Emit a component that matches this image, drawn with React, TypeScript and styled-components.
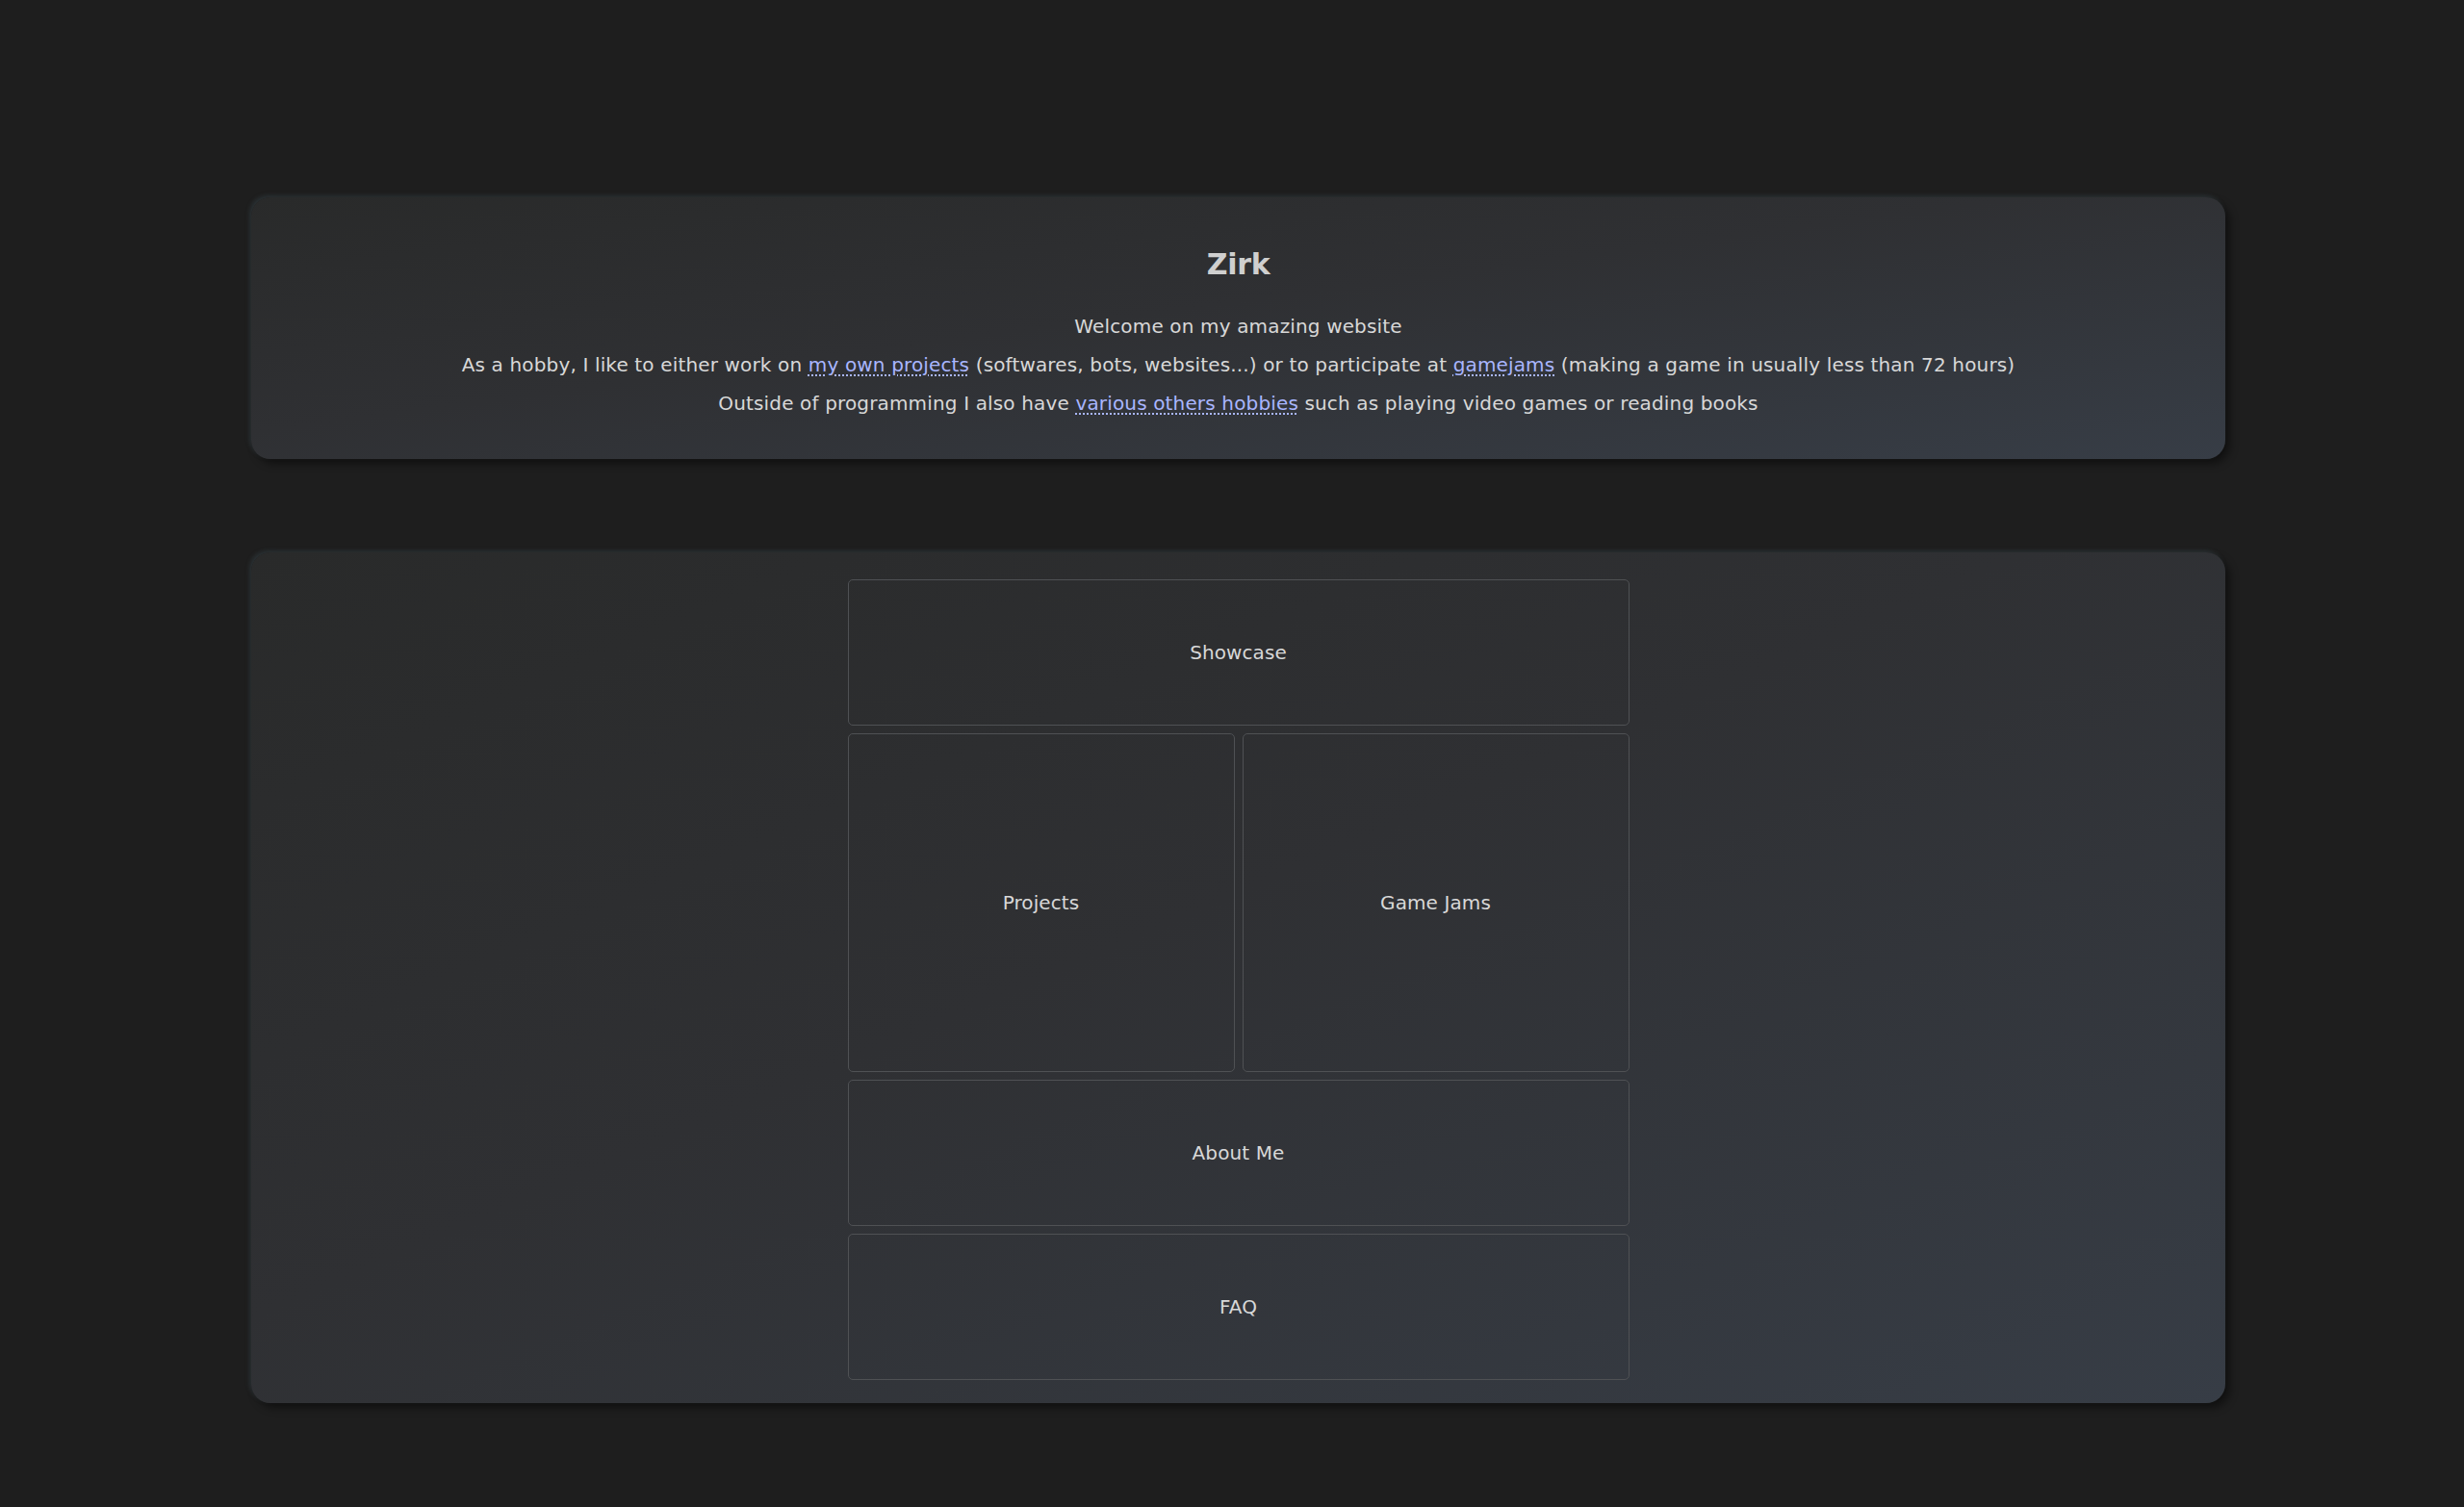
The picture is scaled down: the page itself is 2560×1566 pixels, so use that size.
import React from "react";
import styled, { createGlobalStyle } from "styled-components";

const Global = createGlobalStyle`
  html, body {
    margin: 0;
    padding: 0;
    background: #1e1e1e;
  }
  body {
    font-family: "DejaVu Sans", Verdana, sans-serif;
    color: #d6d6d6;
  }
`;

const Page = styled.div`
  display: flex;
  flex-direction: column;
  gap: 97px;
  padding: 205px 248px 108px 261px;
`;

const Card = styled.section`
  border-radius: 20px;
  background: linear-gradient(to bottom right, #292a2a 0%, #2f3033 45%, #373d46 100%);
  box-shadow: 5px 5px 8px rgba(0, 0, 0, 0.45), -2px -2px 4px rgba(70, 90, 96, 0.35);
`;

const Header = styled(Card)`
  padding: 50px 40px 38px;
  text-align: center;
`;

const Title = styled.h1`
  margin: 0 0 24px;
  font-size: 30px;
  line-height: 40px;
  font-weight: bold;
  letter-spacing: -0.3px;
  color: #cfcfcf;
`;

const Line = styled.p`
  margin: 0;
  font-size: 20px;
  line-height: 40px;
  letter-spacing: 0.15px;
  color: #d8d8d8;
`;

const Link = styled.a`
  color: #a9b6ff;
  text-decoration: underline dotted;
  text-underline-offset: 3px;
`;

const Nav = styled(Card)`
  padding: 28px 0 24px;
  display: flex;
  justify-content: center;
`;

const Grid = styled.div`
  display: grid;
  grid-template-columns: 402px 402px;
  grid-template-rows: 152px 352px 152px 152px;
  gap: 8px;
`;

const Tile = styled.a<{ $wide?: boolean }>`
  grid-column: ${(p) => (p.$wide ? "1 / span 2" : "auto")};
  display: flex;
  align-items: center;
  justify-content: center;
  box-sizing: border-box;
  border: 1px solid #4f5154;
  border-radius: 5px;
  background: rgba(255, 255, 255, 0.005);
  color: #d8d8d8;
  font-size: 20px;
  letter-spacing: 0.1px;
  text-decoration: none;
`;

export default function App() {
  return (
    <>
      <Global />
      <Page>
        <Header>
          <Title>Zirk</Title>
          <Line>Welcome on my amazing website</Line>
          <Line>
            As a hobby, I like to either work on <Link href="#">my own projects</Link> (softwares, bots,
            websites...) or to participate at <Link href="#">gamejams</Link> (making a game in usually less
            than 72 hours)
          </Line>
          <Line>
            Outside of programming I also have <Link href="#">various others hobbies</Link> such as playing
            video games or reading books
          </Line>
        </Header>
        <Nav>
          <Grid>
            <Tile $wide href="#">Showcase</Tile>
            <Tile href="#">Projects</Tile>
            <Tile href="#">Game Jams</Tile>
            <Tile $wide href="#">About Me</Tile>
            <Tile $wide href="#">FAQ</Tile>
          </Grid>
        </Nav>
      </Page>
    </>
  );
}
